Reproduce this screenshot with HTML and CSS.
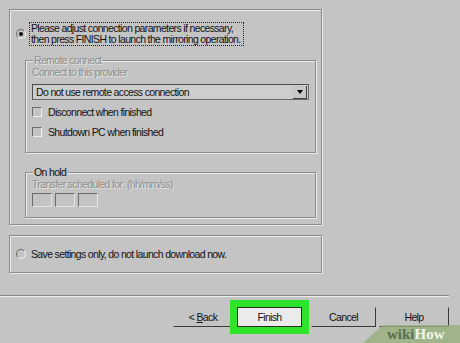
FILE: index.html
```html
<!DOCTYPE html>
<html lang="en">
<head>
    <meta charset="UTF-8">
    <title>Mirroring wizard - Finish</title>
    <link rel="stylesheet" href="styles.css">
</head>
<body>
    <div class="content">
        <div class="group main-group">
            <div class="option-row">
                <span class="radio on"></span>
                <span class="focus-label">Please adjust connection parameters if necessary,<br>then press FINISH to launch the mirroring operation.</span>
            </div>

            <fieldset class="frame remote">
                <legend class="disabled">Remote connect</legend>
                <div class="disabled">Connect to this provider</div>
                <div class="combo">
                    <span class="combo-text">Do not use remote access connection</span>
                    <span class="combo-btn"><span class="arrow"></span></span>
                </div>
                <label class="check-row first"><span class="check"></span>Disconnect when finished</label>
                <label class="check-row"><span class="check"></span>Shutdown PC when finished</label>
            </fieldset>

            <fieldset class="frame hold">
                <legend>On hold</legend>
                <div class="disabled">Transfer scheduled for: (hh/mm/ss)</div>
                <div class="time-boxes">
                    <span class="time-box"></span>
                    <span class="time-box"></span>
                    <span class="time-box"></span>
                </div>
            </fieldset>
        </div>

        <div class="group save-group">
            <span class="radio"></span>
            <span class="save-text">Save settings only, do not launch download now.</span>
        </div>
    </div>

    <div class="separator"></div>

    <div class="buttons">
        <button class="btn back">&lt; <u>B</u>ack</button>
        <button class="btn finish">Finish</button>
        <button class="btn cancel">Cancel</button>
        <button class="btn help">Help</button>
    </div>

    <div class="wikihow"><span class="wiki">wiki</span><span class="how">How</span></div>
</body>
</html>
```

FILE: styles.css
```css
/* Page */
html, body {
    margin: 0;
    padding: 0;
    height: 100%;
    overflow: hidden;
}

body {
    position: relative;
    background: #c4c4c4;
    color: #111;
    font-family: "Liberation Sans", Arial, sans-serif;
    font-size: 10.5px;
    letter-spacing: -0.65px;
    line-height: 11px;
}

.content {
    padding: 9px 0 0 9px;
    width: 313px;
}

/* Etched group boxes */
.group {
    box-sizing: border-box;
    border: 1px solid #8a8a8a;
    box-shadow: inset 1px 1px 0 #ececec, 1px 1px 0 #ececec;
}

.main-group {
    height: 216px;
    padding: 12px 0 0 6px;
}

.option-row {
    display: flex;
    align-items: center;
    gap: 3px;
}

.focus-label {
    border: 1px dotted #222;
    padding: 0 2px 0 1px;
}

/* Radio buttons */
.radio {
    box-sizing: border-box;
    width: 10px;
    height: 10px;
    border-radius: 50%;
    border: 1px solid;
    border-color: #6c6c6c #f2f2f2 #f2f2f2 #6c6c6c;
    display: flex;
    align-items: center;
    justify-content: center;
    flex-shrink: 0;
}

.radio.on::after {
    content: "";
    width: 4px;
    height: 4px;
    border-radius: 50%;
    background: #111;
}

/* Frames with legends */
.frame {
    box-sizing: border-box;
    width: 291px;
    margin: 9px 0 0 9px;
    padding: 1px 0 0 6px;
    border: 1px solid #8a8a8a;
    box-shadow: inset 1px 1px 0 #ececec, 1px 1px 0 #ececec;
    min-width: 0;
}

.frame legend {
    padding: 0 1px;
    margin-left: 1px;
    background: #c4c4c4;
}

.disabled {
    color: #8e8e8e;
    text-shadow: 1px 1px 0 #e6e6e6;
}

.remote {
    height: 98px;
}

.combo {
    box-sizing: border-box;
    display: flex;
    align-items: center;
    justify-content: space-between;
    width: 277px;
    height: 16px;
    margin-top: 6px;
    border: 1px solid #4c4c4c;
    border-right-color: #6a6a6a;
    border-bottom-color: #6a6a6a;
    background: #cdcdcd;
}

.combo-text {
    padding-left: 3px;
}

.combo-btn {
    box-sizing: border-box;
    width: 14px;
    height: 13px;
    margin-right: 1px;
    display: flex;
    align-items: center;
    justify-content: center;
    background: #c6c6c6;
    border-right: 1px solid #404040;
    border-bottom: 1px solid #404040;
}

.arrow {
    width: 0;
    height: 0;
    border-left: 3px solid transparent;
    border-right: 3px solid transparent;
    border-top: 4px solid #000;
}

.check-row {
    display: flex;
    align-items: center;
    gap: 6px;
    height: 12px;
    margin-top: 8px;
}

.check-row.first {
    margin-top: 6px;
}

.check {
    box-sizing: border-box;
    width: 10px;
    height: 10px;
    border: 1px solid;
    border-color: #6c6c6c #efefef #efefef #6c6c6c;
}

.hold {
    height: 51px;
    margin-top: 14px;
}

.time-boxes {
    display: flex;
    gap: 3px;
    margin-top: 3px;
}

.time-box {
    box-sizing: border-box;
    width: 20px;
    height: 14px;
    border: 1px solid;
    border-color: #6c6c6c #e4e4e4 #e4e4e4 #6c6c6c;
}

.save-group {
    height: 38px;
    margin-top: 10px;
    padding-left: 6px;
    display: flex;
    align-items: center;
    gap: 5px;
}

/* Bottom bar */
.separator {
    width: 449px;
    height: 1px;
    margin-top: 22px;
    background: #8a8a8a;
    border-bottom: 1px solid #ededed;
}

.buttons {
    display: flex;
    justify-content: flex-end;
    width: 449px;
    margin-top: 10px;
}

.btn {
    box-sizing: border-box;
    height: 20px;
    padding: 0;
    font: inherit;
    letter-spacing: inherit;
    color: #111;
    background: #c4c4c4;
    border: 1px solid;
    border-color: #c4c4c4 #3a3a3a #3a3a3a #c4c4c4;
}

.back {
    width: 60px;
}

.finish {
    width: 65px;
    margin-left: 4px;
    background: #ebebeb;
    border-color: #2a2a2a;
    outline: 7px solid #2fe22a;
}

.cancel {
    width: 65px;
    margin-left: 9px;
}

.help {
    width: 70px;
    margin-left: 3px;
}

/* Watermark */
.wikihow {
    position: absolute;
    right: 0;
    bottom: 0;
    width: 97px;
    height: 18px;
    box-sizing: border-box;
    padding: 2px 0 0 24px;
    background: rgba(150, 176, 124, 0.8);
    clip-path: polygon(20px 0, 100% 0, 100% 100%, 0 100%);
    font-family: "Liberation Serif", serif;
    font-weight: bold;
    font-size: 15px;
    letter-spacing: 0;
    line-height: 15px;
}

.wiki {
    color: #5d6e50;
}

.how {
    color: #f1f4ec;
}
```
